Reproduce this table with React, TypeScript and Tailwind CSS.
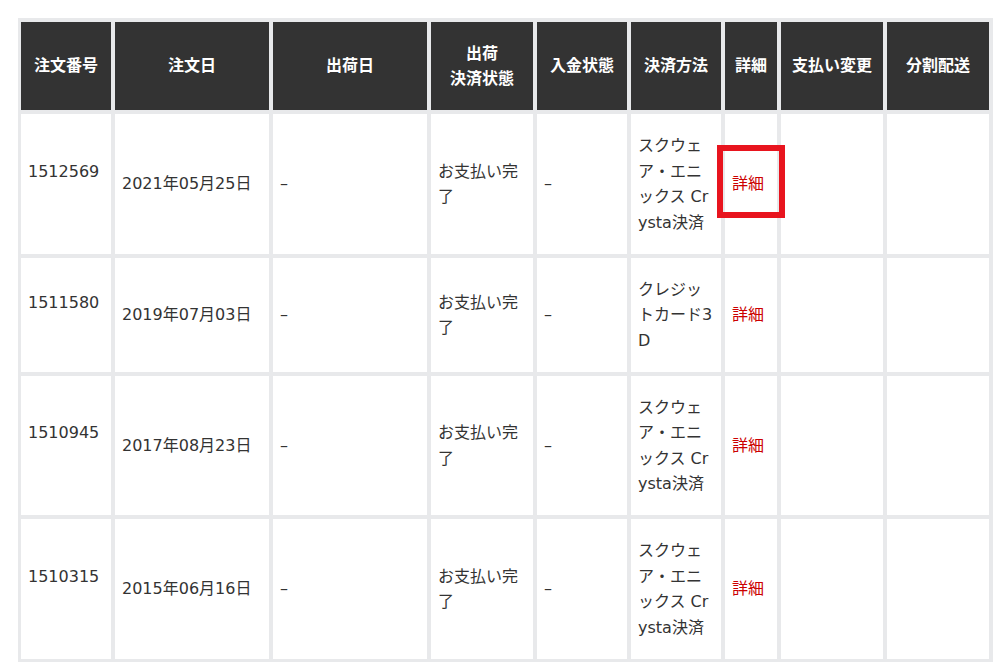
import React from "react";

type Order = {
  no: string;
  date: string;
  method: string;
  h: string;
};

const headers: React.ReactNode[] = [
  "注文番号",
  "注文日",
  "出荷日",
  <>
    出荷
    <br />
    決済状態
  </>,
  "入金状態",
  "決済方法",
  "詳細",
  "支払い変更",
  "分割配送",
];

const orders: Order[] = [
  { no: "1512569", date: "2021年05月25日", method: "スクウェア・エニックス Crysta決済", h: "h-[140px]" },
  { no: "1511580", date: "2019年07月03日", method: "クレジットカード3D", h: "h-[114px]" },
  { no: "1510945", date: "2017年08月23日", method: "スクウェア・エニックス Crysta決済", h: "h-[139px]" },
  { no: "1510315", date: "2015年06月16日", method: "スクウェア・エニックス Crysta決済", h: "h-[140px]" },
];

function Cell({ children, className = "" }: { children?: React.ReactNode; className?: string }) {
  return (
    <div className={`flex items-center bg-white px-[7px] ${className}`}>
      <div className="min-w-0 [word-break:break-all]">{children}</div>
    </div>
  );
}

export default function App() {
  return (
    <div
      className="min-h-screen bg-white pl-[18px] pt-[18px] text-[16px] leading-[25.5px] text-[#333]"
      style={{ fontFamily: '"DejaVu Sans", "Noto Sans CJK JP", sans-serif' }}
    >
      <div className="relative w-[975px] bg-[#e8e9eb] pb-[3px] pl-[3px] pr-[4px] pt-[4px]">
        <div className="grid grid-cols-[90px_154px_154px_102px_90px_90px_52px_102px_102px] gap-[4px]">
          {headers.map((label, i) => (
            <div
              key={i}
              className="flex h-[88px] items-center justify-center bg-[#333] text-center font-bold text-white"
            >
              <div>{label}</div>
            </div>
          ))}

          {orders.map((o) => (
            <React.Fragment key={o.no}>
              <Cell className={o.h}>
                {o.no}
                <br />
                <span className="text-[#f0f0f0]">&nbsp;</span>
              </Cell>
              <Cell className={o.h}>{o.date}</Cell>
              <Cell className={o.h}>–</Cell>
              <Cell className={o.h}>お支払い完了</Cell>
              <Cell className={o.h}>–</Cell>
              <Cell className={o.h}>{o.method}</Cell>
              <Cell className={o.h}>
                <a className="text-[#cc0000] no-underline">詳細</a>
              </Cell>
              <Cell className={o.h} />
              <Cell className={o.h} />
            </React.Fragment>
          ))}
        </div>

        {/* annotation box round the first 詳細 link */}
        <div className="pointer-events-none absolute left-[699px] top-[127px] h-[73px] w-[68px] border-[6px] border-[#e8141e]" />
      </div>
    </div>
  );
}
